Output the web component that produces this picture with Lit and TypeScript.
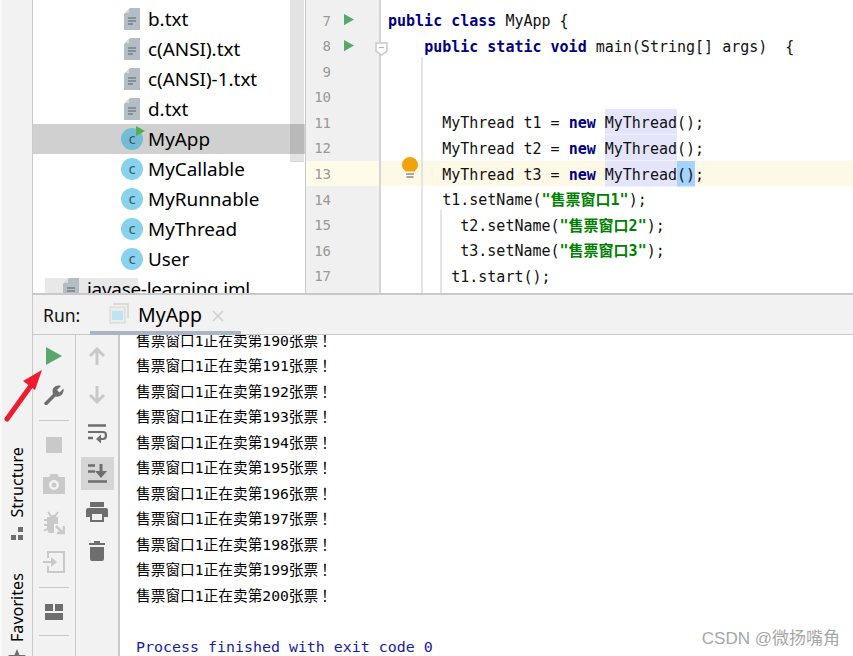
import { LitElement, html, css } from "lit";
import { customElement } from "lit/decorators.js";

const play = (c: string, w: number, h: number) => html`<svg width=${w} height=${h} viewBox="0 0 16 18"><path d="M0 0L16 9L0 18Z" fill=${c} /></svg>`;

const fileIcon = html`<svg class="file" width="16" height="22" viewBox="0 0 16 22">
  <path d="M6 0H16V22H0V6Z" fill="#b4bdc4" />
  <path d="M5 1V5H1Z" fill="#d5dadd" />
  <path d="M4 10H12M4 13H12M4 16H9" stroke="#59636b" stroke-width="1.2" />
</svg>`;

const files = ["a.txt", "b.txt", "c(ANSI).txt", "c(ANSI)-1.txt", "d.txt"];
const classes = ["MyApp", "MyCallable", "MyRunnable", "MyThread", "User"];

const kw = (s: string) => html`<span class="kw">${s}</span>`;
const str = (s: string) => html`<span class="str">${s}</span>`;
const hl = (s: string) => html`<span class="hl">${s}</span>`;
const sp = (n: number) => " ".repeat(n);

const threadLine = (n: number, cur = false) => html`${sp(6)}MyThread t${n} = ${kw("new")} ${hl("MyThread")}${cur ? html`<span class="br">()</span>` : "()"};`;

const codeLines = [
  { n: 6, c: html`` },
  { n: 7, run: true, c: html`${kw("public")} ${kw("class")} MyApp {` },
  { n: 8, run: true, c: html`${sp(4)}${kw("public")} ${kw("static")} ${kw("void")} main(String[] args)  {` },
  { n: 9, c: html`` },
  { n: 10, c: html`` },
  { n: 11, c: threadLine(1) },
  { n: 12, c: threadLine(2) },
  { n: 13, cur: true, c: threadLine(3, true) },
  { n: 14, c: html`${sp(6)}t1.setName(${str('"售票窗口1"')});` },
  { n: 15, c: html`${sp(8)}t2.setName(${str('"售票窗口2"')});` },
  { n: 16, c: html`${sp(8)}t3.setName(${str('"售票窗口3"')});` },
  { n: 17, c: html`${sp(7)}t1.start();` },
  { n: "", c: html`` },
];

const on = "#6e6e6e";
const off = "#c9c9c9";

const col1 = [
  html`<div class="slot">${play("#59a869", 16, 18)}</div>`,
  html`<div class="slot"><svg width="22" height="22" viewBox="0 0 22 22"><path d="M2 21L1 19L10 10C8.500 6 10.500 1.500 15.500 1.500C16.500 1.500 17.500 1.800 18 2L14 6L16.500 8.500L20.500 4.500C21.500 9.500 17 14 12.500 12.500L4 21Z" fill="${on}" /></svg></div>`,
  html`<div class="sep"></div>`,
  html`<div class="slot"><div class="stop"></div></div>`,
  html`<div class="slot"><svg width="22" height="20" viewBox="0 0 22 20"><path fill-rule="evenodd" d="M0 3H6L7.500 0H14.500L16 3H22V20H0ZM11 6A5 5 0 1 0 11 16A5 5 0 1 0 11 6ZM11 8.500A2.500 2.500 0 1 1 11 13.500A2.500 2.500 0 1 1 11 8.500Z" fill="${off}" /></svg></div>`,
  html`<div class="slot"><svg width="22" height="24" viewBox="0 0 22 24"><path d="M5 1L8 5H12L15 1M1 9H4M1 14H4M1 20L4 18" stroke="${off}" stroke-width="2" fill="none" /><path d="M4 6H15V13H11V22H6L4 19Z" fill="${off}" /><path d="M13 15L20 22M14 22H21V15" stroke="${off}" stroke-width="2.500" fill="none" /></svg></div>`,
  html`<div class="slot"><svg width="22" height="22" viewBox="0 0 22 22"><path d="M5 7V1H21V21H5V15" stroke="${off}" stroke-width="2" fill="none" /><path d="M0 10H8V6L14 11L8 16V12H0Z" fill="${off}" /></svg></div>`,
  html`<div class="sep"></div>`,
  html`<div class="slot"><svg width="18" height="16" viewBox="0 0 18 16"><path d="M0 0H8V7H0ZM10 0H18V7H10ZM0 9H18V16H0Z" fill="${on}" /></svg></div>`,
  html`<div class="sep last"></div>`,
];

const col2 = [
  html`<div class="slot"><svg width="16" height="18" viewBox="0 0 16 18"><path d="M8 18V2M1 9L8 2L15 9" stroke="${off}" stroke-width="3" fill="none" /></svg></div>`,
  html`<div class="slot"><svg width="16" height="18" viewBox="0 0 16 18"><path d="M8 0V16M1 9L8 16L15 9" stroke="${off}" stroke-width="3" fill="none" /></svg></div>`,
  html`<div class="slot"><svg width="19" height="20" viewBox="0 0 19 20"><path d="M0 1.500H18M0 14H5" stroke="${on}" stroke-width="2.500" /><path d="M0 8H15C19 8 19 15 15 15H10" stroke="${on}" stroke-width="2.200" fill="none" /><path d="M13 10.500L8 15L13 19.500Z" fill="${on}" /></svg></div>`,
  html`<div class="slot picked"><svg width="19" height="19" viewBox="0 0 19 19"><path d="M0 1.500H7M0 7.500H7M0 17.500H19" stroke="${on}" stroke-width="2.500" /><path d="M13 0V9" stroke="${on}" stroke-width="3" /><path d="M7 7H19L13 14Z" fill="${on}" /></svg></div>`,
  html`<div class="slot"><svg width="22" height="20" viewBox="0 0 22 20"><path fill-rule="evenodd" d="M4 0H18V5H4ZM2 6H20Q22 6 22 8V15H18V20H4V15H0V8Q0 6 2 6ZM6 12V18H16V12Z" fill="${on}" /></svg></div>`,
  html`<div class="slot"><svg width="16" height="20" viewBox="0 0 16 20"><path d="M5 0H11V2H16V4H0V2H5ZM1 6H15V18Q15 20 13 20H3Q1 20 1 18Z" fill="${on}" /></svg></div>`,
];

const consoleRows: string[] = [];
for (let i = 190; i <= 200; i++) consoleRows.push(`售票窗口1正在卖第${i}张票`);

@customElement("app-root")
export class AppRoot extends LitElement {
  static styles = css`
    :host {
      display: flex;
      width: 853px;
      height: 656px;
      overflow: hidden;
      position: relative;
      background: #fff;
      font-family: "Noto Sans", sans-serif;
      color: #000;
    }
    .strip {
      width: 30px;
      flex: none;
      border-left: 2px solid #fafafa;
      border-right: 1px solid #c9c9c9;
      background: #f2f2f2;
      display: flex;
      flex-direction: column;
      align-items: center;
      padding-top: 447px;
    }
    .side-label {
      writing-mode: vertical-rl;
      transform: rotate(180deg);
      font-size: 16.2px;
      line-height: 18px;
      white-space: nowrap;
    }
    .side-icon {
      flex: none;
      margin: 9px 0 32px;
    }
    .star {
      flex: none;
      margin-top: 7px;
    }
    .main {
      flex: 1;
      min-width: 0;
      display: flex;
      flex-direction: column;
    }
    .top {
      height: 295px;
      box-sizing: border-box;
      flex: none;
      display: flex;
      overflow: hidden;
      border-bottom: 2px solid #c9c9c9;
    }
    .tree {
      width: 272px;
      flex: none;
      position: relative;
      overflow: hidden;
      background: #fff;
    }
    .tree-scroll {
      margin-top: -26px;
    }
    .row {
      height: 30px;
      display: flex;
      align-items: center;
      padding-left: 88px;
      font-size: 18.9px;
      line-height: 30px;
      white-space: nowrap;
    }
    .row.selected {
      background: #d0d0d0;
    }
    .row .file {
      margin: 0 8px 0 3px;
      flex: none;
    }
    .cls {
      width: 22px;
      height: 22px;
      border-radius: 50%;
      background: #87d2ec;
      color: #3f5a66;
      font-size: 15px;
      line-height: 20px;
      text-align: center;
      margin-right: 5px;
      flex: none;
      position: relative;
    }
    .selected .cls {
      background: #73bcd8;
    }
    .cls svg {
      position: absolute;
      left: 15px;
      top: -2px;
    }
    .iml {
      padding-left: 30px;
      position: relative;
      letter-spacing: -0.25px;
    }
    .iml::before {
      content: "";
      position: absolute;
      left: 12px;
      top: 4px;
      width: 93px;
      height: 30px;
      background: #e8e8e8;
    }
    .iml > * {
      position: relative;
    }
    .iml .file {
      margin: 0 8px 0 0;
    }
    .tree-bar {
      position: absolute;
      left: 257px;
      top: 0;
      width: 14px;
      height: 161px;
      background: rgba(0, 0, 0, 0.11);
      border-bottom: 1px solid #d8d8d8;
    }
    .editor {
      flex: 1;
      min-width: 0;
      position: relative;
      overflow: hidden;
      border-left: 1px solid #c9c9c9;
    }
    .lines {
      margin-top: -18.3px;
      font-family: "DejaVu Sans Mono", "Noto Sans CJK SC", monospace;
      font-size: 15px;
    }
    .line {
      height: 25.55px;
      line-height: 25.55px;
      display: flex;
    }
    .line.cur {
      background: #fdf9e6;
    }
    .gut {
      width: 75px;
      flex: none;
      box-sizing: border-box;
      background: #f0f0f0;
      border-right: 2px solid #d4d4d4;
      color: #999;
      font-size: 14px;
      display: flex;
    }
    .cur .gut {
      background: #fefbe9;
    }
    .num {
      width: 25px;
      text-align: right;
      flex: none;
      padding-top: 1.5px;
    }
    .run {
      margin: 6px 0 0 13px;
      line-height: 0;
    }
    .code {
      padding-left: 7px;
      color: #111;
      white-space: pre;
      transform: translateY(1.5px);
    }
    .kw {
      color: #000080;
      font-weight: bold;
    }
    .str {
      color: #008000;
      font-weight: bold;
    }
    .hl,
    .br {
      display: inline-block;
      height: 24.05px;
    }
    .hl {
      background: #e4e4fb;
      box-shadow: 0 -1.5px 0 #e4e4fb;
    }
    .br {
      background: #a6d2ff;
      box-shadow: 0 -1.5px 0 #a6d2ff;
    }
    .guide {
      position: absolute;
      width: 2px;
      bottom: 0;
      background: #e4e4e4;
    }
    .g1 {
      left: 115px;
      top: 57px;
    }
    .g2 {
      left: 134px;
      top: 210px;
    }
    .fold {
      position: absolute;
      left: 69px;
      top: 42px;
    }
    .bulb {
      position: absolute;
      left: 96px;
      top: 156px;
    }
    .run-head {
      height: 40px;
      flex: none;
      box-sizing: border-box;
      background: #f2f2f2;
      border-bottom: 1px solid #c9c9c9;
      display: flex;
      align-items: center;
      padding-left: 10px;
      font-size: 17.5px;
      position: relative;
      z-index: 1;
    }
    .run-label {
      width: 47px;
      color: #111;
    }
    .tab {
      width: 151px;
      height: 40px;
      box-sizing: border-box;
      border-bottom: 4px solid #a9b4c6;
      margin-bottom: -1px;
      display: flex;
      align-items: center;
      padding: 0 0 0 19px;
      font-size: 19.5px;
    }
    .tab-name {
      margin: 3px 10px 0 9px;
    }
    .tab-close {
      margin-top: 5px;
    }
    .bottom {
      flex: 1;
      min-height: 0;
      display: flex;
    }
    .tools {
      flex: none;
      background: #f2f2f2;
      box-sizing: border-box;
      display: flex;
      flex-direction: column;
      align-items: center;
      padding-top: 1.5px;
    }
    .t1 {
      width: 43px;
      border-right: 1px solid #c9c9c9;
    }
    .t2 {
      width: 44px;
      border-right: 2px solid #c9c9c9;
    }
    .slot {
      height: 39px;
      width: 33px;
      flex: none;
      display: flex;
      align-items: center;
      justify-content: center;
    }
    .slot.picked {
      height: 33px;
      margin: 3px 0;
      background: #d5d5d5;
    }
    .sep {
      width: 30px;
      height: 1px;
      margin: 5px 0;
      flex: none;
      background: #c9c9c9;
    }
    .sep.last {
      margin-top: 3px;
    }
    .stop {
      width: 16px;
      height: 16px;
      background: #c9c9c9;
    }
    .console {
      flex: 1;
      min-width: 0;
      overflow: hidden;
      padding-left: 16px;
      font-family: "DejaVu Sans Mono", "Noto Sans CJK SC", monospace;
      font-size: 14.7px;
    }
    .out {
      margin-top: -7.5px;
    }
    .out div {
      height: 25.5px;
      line-height: 25.5px;
      white-space: pre;
    }
    .bang {
      margin-left: 3px;
    }
    .out .exit {
      color: #1a1aa6;
      font-size: 14.95px;
      padding-top: 1px;
    }
    .arrow {
      position: absolute;
      left: 0;
      top: 360px;
    }
    .mark {
      position: absolute;
      right: 13px;
      top: 629px;
      font-family: "Liberation Sans", "Noto Sans CJK SC", sans-serif;
      font-size: 17px;
      line-height: 20px;
      color: #a6a6a6;
      white-space: nowrap;
    }
  `;

  render() {
    return html`
      <div class="strip">
        <div class="side-label">Structure</div>
        <svg class="side-icon" width="14" height="14" viewBox="0 0 14 14"><path d="M8 0H13V5H8ZM1 8H6V13H1ZM8 8H13V13H8Z" fill="#6e6e6e" /></svg>
        <div class="side-label">Favorites</div>
        <svg class="star" width="18" height="17" viewBox="0 0 18 17"><path d="M9 0L11.500 6H18L13 10L15 17L9 13L3 17L5 10L0 6H6.500Z" fill="#6e6e6e" /></svg>
      </div>
      <div class="main">
        <div class="top">
          <div class="tree">
            <div class="tree-scroll">
              ${files.map((f) => html`<div class="row">${fileIcon}<span>${f}</span></div>`)}
              ${classes.map(
                (c, i) => html`<div class="row ${i === 0 ? "selected" : ""}">
                  <div class="cls">c${i === 0 ? html`<svg width="9" height="10" viewBox="0 0 16 18"><path d="M0 0L16 9L0 18Z" fill="#4fb04a" /></svg>` : ""}</div>
                  <span>${c}</span>
                </div>`
              )}
              <div class="row iml">${fileIcon}<span>javase-learning.iml</span></div>
            </div>
            <div class="tree-bar"></div>
          </div>
          <div class="editor">
            <div class="lines">
              ${codeLines.map(
                (l) => html`<div class="line ${l.cur ? "cur" : ""}">
                  <div class="gut"><span class="num">${l.n}</span>${l.run ? html`<span class="run">${play("#59a869", 10, 13)}</span>` : ""}</div>
                  <div class="code">${l.c}</div>
                </div>`
              )}
            </div>
            <div class="guide g1"></div>
            <div class="guide g2"></div>
            <svg class="fold" width="13" height="14" viewBox="0 0 13 14"><path d="M1 1H12V9L6.500 13L1 9Z" fill="#fff" stroke="#c9c9c9" stroke-width="1.500" /><path d="M4 5.500H9" stroke="#b5b5b5" stroke-width="1.200" /></svg>
            <svg class="bulb" width="16" height="23" viewBox="0 0 16 23"><path d="M8 1A8 8 0 0 1 16 9C16 12 14 13.500 12.500 15.500H3.500C2 13.500 0 12 0 9A8 8 0 0 1 8 1Z" fill="#f0a30a" /><path d="M4 18H12M4.500 21H11.500" stroke="#8a8a8a" stroke-width="1.500" /></svg>
          </div>
        </div>
        <div class="run-head">
          <span class="run-label">Run:</span>
          <div class="tab">
            <svg width="20" height="21" viewBox="0 0 20 21"><path d="M4 1H19V15" fill="none" stroke="#d4d4d4" stroke-width="1.500" /><rect x="1" y="4" width="15" height="16" fill="#ececec" stroke="#d4d4d4" /><rect x="3" y="8" width="11" height="9" fill="#bfe3ef" /></svg>
            <span class="tab-name">MyApp</span>
            <svg class="tab-close" width="12" height="12" viewBox="0 0 12 12"><path d="M1 1L11 11M11 1L1 11" stroke="#cfcfcf" stroke-width="1.500" /></svg>
          </div>
        </div>
        <div class="bottom">
          <div class="tools t1">${col1}</div>
          <div class="tools t2">${col2}</div>
          <div class="console">
            <div class="out">
              ${consoleRows.map((r) => html`<div>${r}<span class="bang">！</span></div>`)}
              <div></div>
              <div class="exit">Process finished with exit code 0</div>
            </div>
          </div>
        </div>
      </div>
      <svg class="arrow" width="50" height="66" viewBox="0 0 50 66"><path d="M7 59L30 27" stroke="#ee1c2e" stroke-width="5" stroke-linecap="round" /><path d="M42 10L23 21L35 30Z" fill="#ee1c2e" /></svg>
      <div class="mark">CSDN @微扬嘴角</div>
    `;
  }
}
